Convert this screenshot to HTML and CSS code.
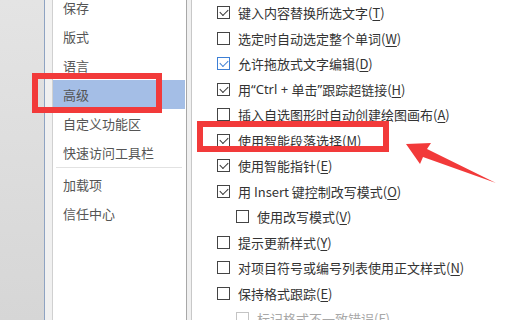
FILE: index.html
```html
<!DOCTYPE html>
<html lang="zh-CN">
<head>
    <meta charset="UTF-8">
    <title>Word 选项 - 高级</title>
    <link rel="stylesheet" href="styles.css">
</head>
<body>
    <div class="screen">
        <div class="backdrop"></div>
        <div class="dialog">
            <ul class="nav">
                <li class="nav-item">保存</li>
                <li class="nav-item">版式</li>
                <li class="nav-item">语言</li>
                <li class="nav-item active">高级</li>
                <li class="nav-item">自定义功能区</li>
                <li class="nav-item">快速访问工具栏</li>
                <li class="nav-sep"></li>
                <li class="nav-item">加载项</li>
                <li class="nav-item">信任中心</li>
            </ul>
            <div class="gutter"></div>
            <div class="options">
                <label class="opt"><span class="box checked"></span>键入内容替换所选文字(<u>T</u>)</label>
                <label class="opt"><span class="box"></span>选定时自动选定整个单词(<u>W</u>)</label>
                <label class="opt"><span class="box checked hover"></span>允许拖放式文字编辑(<u>D</u>)</label>
                <label class="opt"><span class="box checked"></span>用<span class="latin">“Ctrl + </span>单击<span class="latin">”</span>跟踪超链接(<u>H</u>)</label>
                <label class="opt"><span class="box"></span>插入自选图形时自动创建绘图画布(<u>A</u>)</label>
                <label class="opt"><span class="box checked"></span>使用智能段落选择(<u>M</u>)</label>
                <label class="opt"><span class="box checked"></span>使用智能指针(<u>E</u>)</label>
                <label class="opt"><span class="box checked"></span>用 Insert 键控制改写模式(<u>O</u>)</label>
                <label class="opt sub"><span class="box"></span>使用改写模式(<u>V</u>)</label>
                <label class="opt"><span class="box"></span>提示更新样式(<u>Y</u>)</label>
                <label class="opt"><span class="box"></span>对项目符号或编号列表使用正文样式(<u>N</u>)</label>
                <label class="opt"><span class="box"></span>保持格式跟踪(<u>E</u>)</label>
                <label class="opt sub disabled"><span class="box"></span>标记格式不一致错误(<u>F</u>)</label>
            </div>
        </div>

        <!-- annotations drawn over the screenshot -->
        <div class="mark mark-nav"></div>
        <div class="mark mark-opt"></div>
        <svg class="arrow" width="530" height="320" viewBox="0 0 530 320">
            <polygon points="406,144 431,143 427,149 496,183 423,157 420,164" fill="#f23a3a"/>
        </svg>
    </div>
</body>
</html>
```

FILE: styles.css
```css
body {
    margin: 0;
    font-family: "Noto Sans CJK SC", "Noto Sans", sans-serif;
    font-size: 13px;
}
.screen {
    position: relative;
    width: 530px;
    height: 320px;
    display: flex;
    overflow: hidden;
}
.backdrop {
    width: 44px;
    background: linear-gradient(#e4e4e4, #d6d6d6);
    border-right: 1px solid #8ea3c2;
}
.dialog {
    flex: 1;
    display: flex;
    background: #f0f0f0;
    padding-left: 7px;
}
.nav {
    list-style: none;
    margin: 0;
    padding: 0;
    width: 132px;
    background: #fff;
    border-left: 1px solid #d0d0d0;
    border-right: 1px solid #a8a8a8;
    padding-right: 1px;
}
.nav-item {
    height: 29px;
    line-height: 29px;
    padding-left: 10px;
    color: #555;
}
.nav-item:first-child {
    margin-top: -7px;
}
.nav-item.active {
    background: #a4bee6;
}
.nav-sep {
    height: 1px;
    margin: 0 3px 2px 3px;
    background: #e2e2e2;
}
.gutter {
    width: 4px;
}
.options {
    flex: 1;
    background: #fff;
    border-left: 1px solid #c8c8c8;
    padding-left: 25px;
}
.opt {
    display: flex;
    align-items: center;
    height: 25.5px;
    color: #333;
    white-space: pre;
}
.opt u {
    text-underline-offset: 2px;
}
.latin {
    font-family: "Noto Sans", sans-serif;
}
.opt.sub {
    padding-left: 19px;
}
.opt.disabled {
    color: #a8a8a8;
}
.box {
    width: 11px;
    height: 11px;
    border: 1px solid #444;
    background: #fff;
    margin-right: 8px;
    flex: none;
    position: relative;
}
.box.checked::after {
    content: "";
    position: absolute;
    left: 2px;
    top: 0px;
    width: 7px;
    height: 4px;
    border-left: 1.3px solid #333;
    border-bottom: 1.3px solid #333;
    transform: translateY(2px) rotate(-45deg);
}
.box.hover {
    border-color: #3d7fd5;
}
.box.hover::after {
    border-color: #3d7fd5;
}
.opt.disabled .box {
    border-color: #c4c4c4;
}
.mark {
    position: absolute;
    border: 6px solid #f23a3a;
}
.mark-nav {
    left: 32px;
    top: 73px;
    width: 118px;
    height: 28px;
}
.mark-opt {
    left: 197px;
    top: 121px;
    width: 180px;
    height: 19px;
}
.arrow {
    position: absolute;
    left: 0;
    top: 0;
}
```
